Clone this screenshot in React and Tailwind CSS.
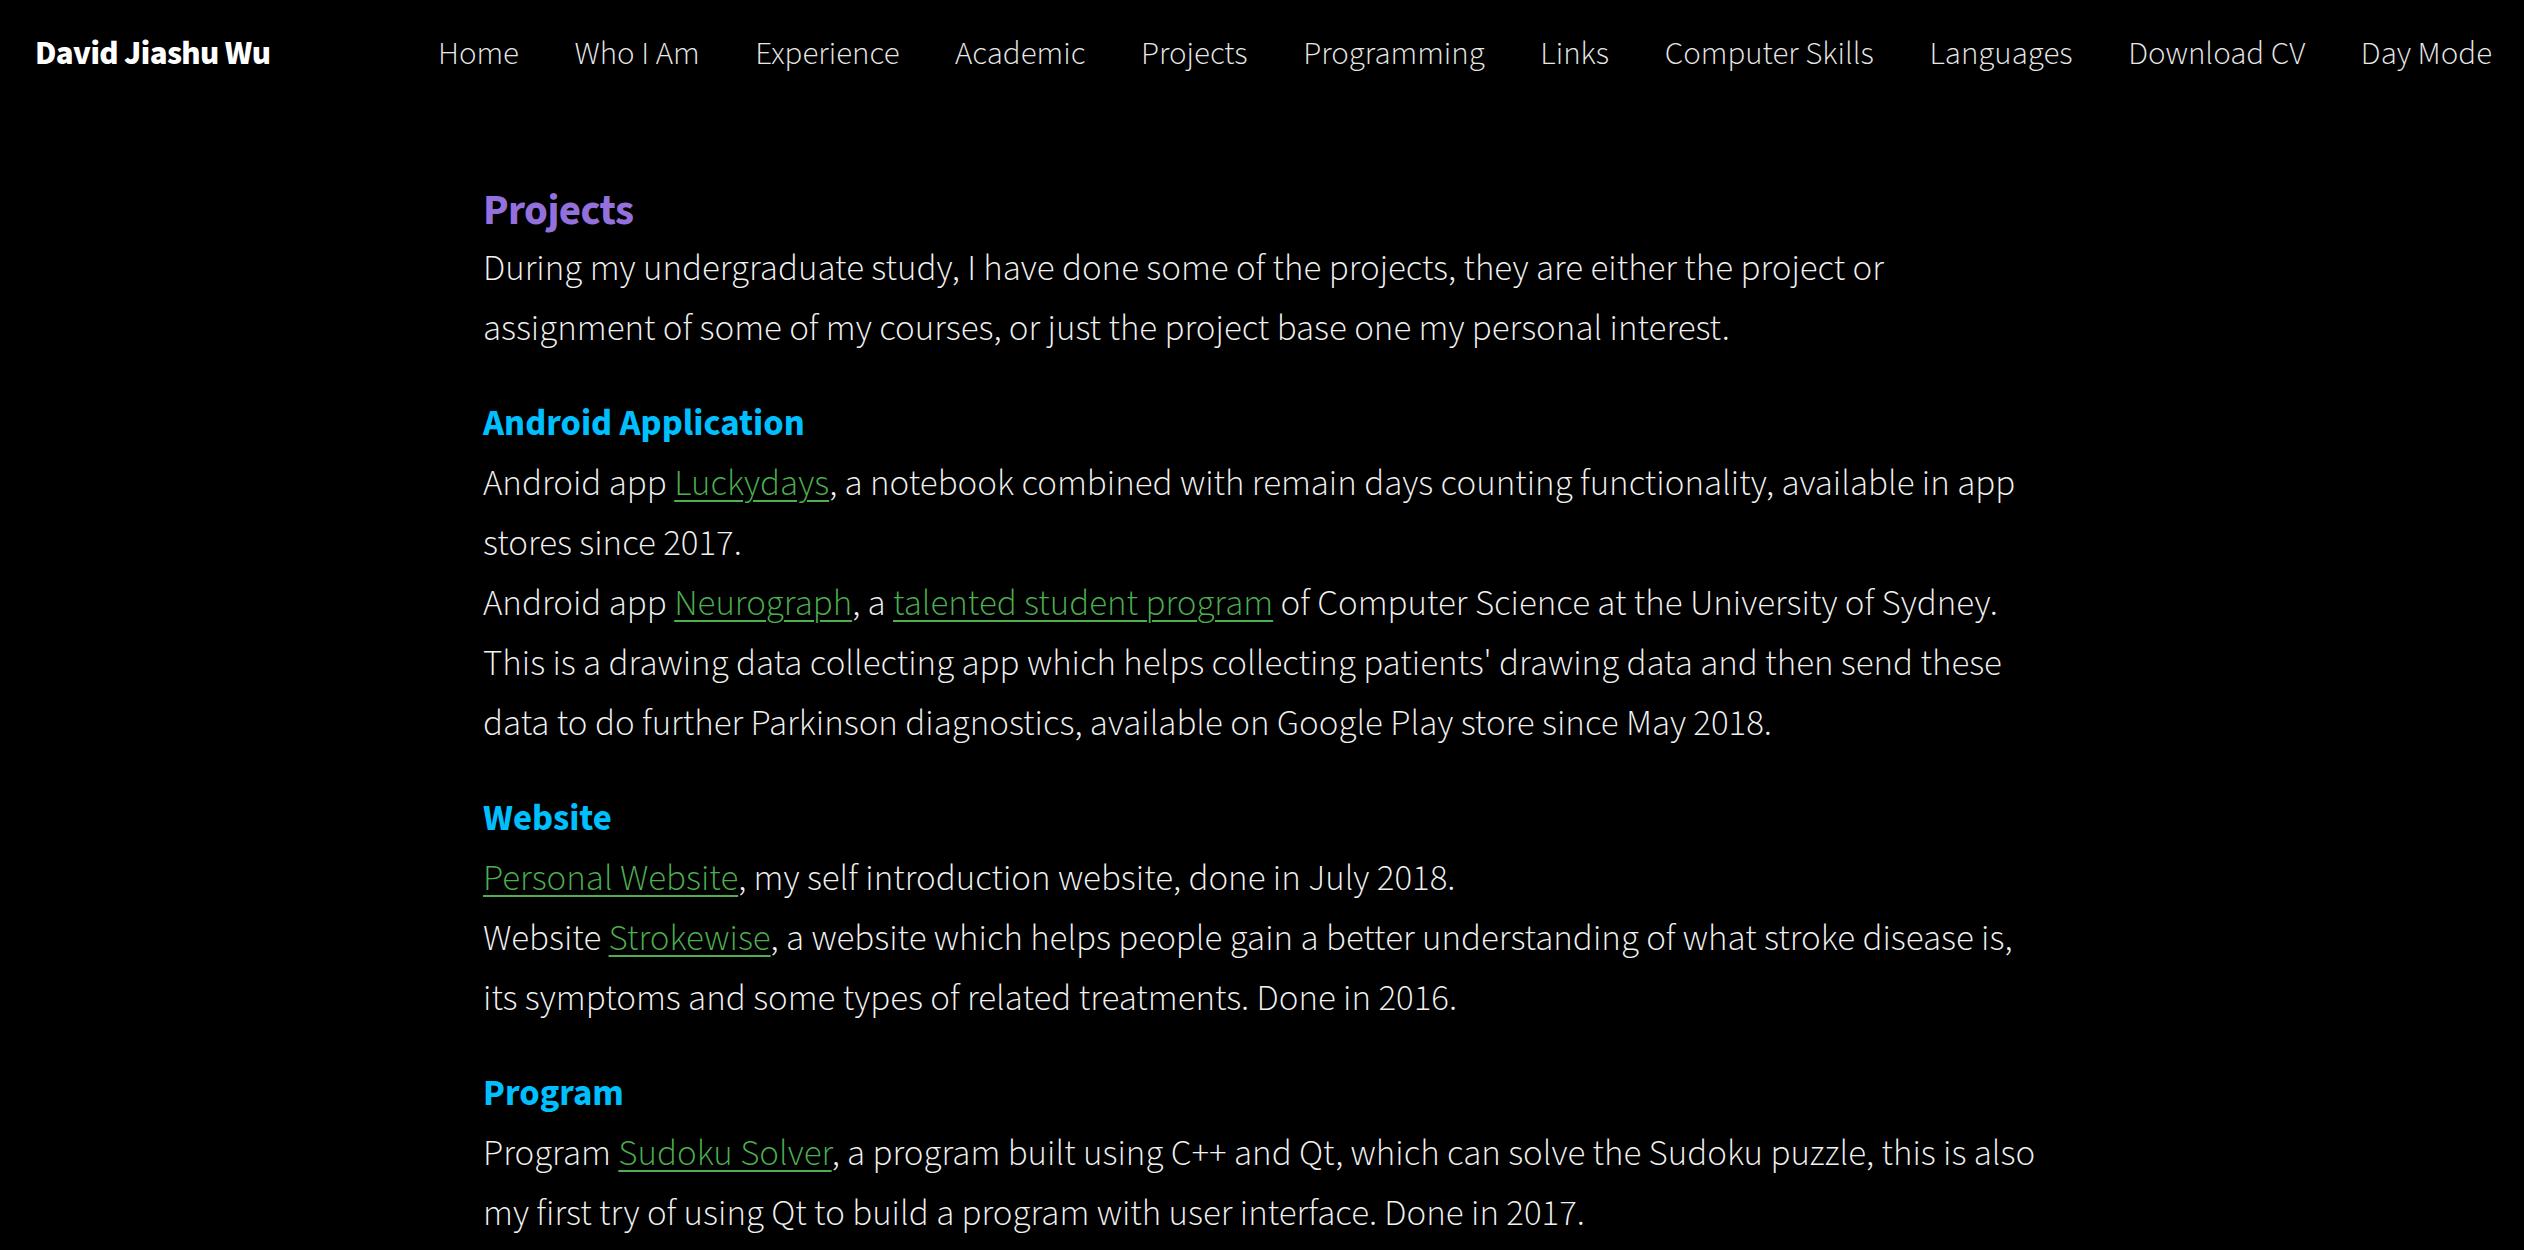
const navItems = ['Home', 'Who I Am', 'Experience', 'Academic', 'Projects', 'Programming', 'Links', 'Computer Skills', 'Languages', 'Download CV', 'Day Mode'];

function A({ children }) {
  return (
    <a href="#" className="text-[#4caf50] underline decoration-[2px] underline-offset-[5px]">
      {children}
    </a>
  );
}

function Section({ title, children }) {
  return (
    <section className="mt-[35px]">
      <h3 className="text-[36.8px] font-bold leading-[60px] text-[#00bfff]">{title}</h3>
      {children}
    </section>
  );
}

export default function App() {
  return (
    <div
      className="min-h-screen bg-black text-[#f2f2f2]"
      style={{ fontFamily: '"Source Sans 3", "Source Sans Pro", "Noto Sans", sans-serif' }}
    >
      <header className="flex h-[108px] items-center justify-between pl-[35px] pr-[32px]">
        <div className="text-[33.6px] font-extrabold tracking-[-0.6px] text-white">David Jiashu Wu</div>
        <nav className="flex items-center gap-[55.6px] text-[32.8px] font-light text-[#e8e8e8]">
          {navItems.map((item) => (
            <a key={item} href="#" className="whitespace-nowrap">
              {item}
            </a>
          ))}
        </nav>
      </header>

      <main className="mx-auto w-[1558px] pt-[75px] pb-[10px] text-[36.8px] font-light leading-[60px]">
        <h2 className="text-[43px] font-bold leading-[56px] tracking-[-0.6px] text-[#9370db]">Projects</h2>
        <p>
          During my undergraduate study, I have done some of the projects, they are either the project or
          assignment of some of my courses, or just the project base one my personal interest.
        </p>

        <Section title="Android Application">
          <p>
            Android app <A>Luckydays</A>, a notebook combined with remain days counting functionality, available in app
            stores since 2017.
          </p>
          <p>
            Android app <A>Neurograph</A>, a <A>talented student program</A> of Computer Science at the University of Sydney.
            This is a drawing data collecting app which helps collecting patients' drawing data and then send these
            data to do further Parkinson diagnostics, available on Google Play store since May 2018.
          </p>
        </Section>

        <Section title="Website">
          <p>
            <A>Personal Website</A>, my self introduction website, done in July 2018.
          </p>
          <p>
            Website <A>Strokewise</A>, a website which helps people gain a better understanding of what stroke disease is,
            its symptoms and some types of related treatments. Done in 2016.
          </p>
        </Section>

        <Section title="Program">
          <p>
            Program <A>Sudoku Solver</A>, a program built using C++ and Qt, which can solve the Sudoku puzzle, this is also
            my first try of using Qt to build a program with user interface. Done in 2017.
          </p>
        </Section>
      </main>
    </div>
  );
}
